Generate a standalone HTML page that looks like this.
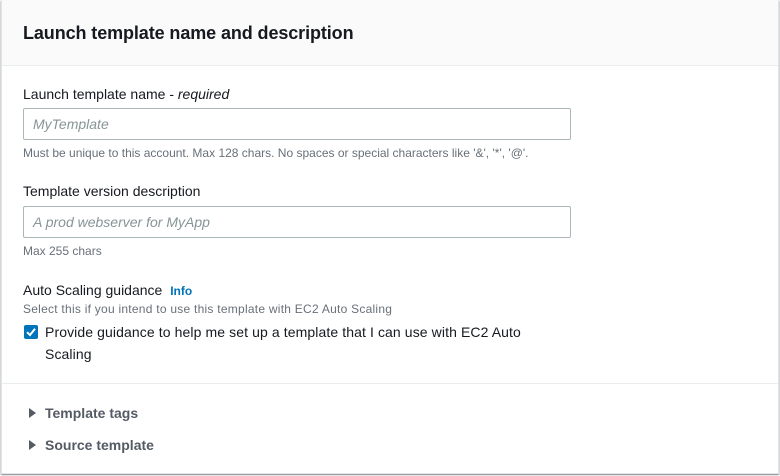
<!DOCTYPE html>
<html><head><style>
*{box-sizing:border-box;margin:0;padding:0}
body{width:780px;height:476px;background:#fff;font-family:"Liberation Sans",sans-serif;color:#16191f;position:relative;overflow:hidden}
.card{position:absolute;left:1px;top:0;width:778px;height:474px;border:1px solid #e1e4e8;border-top:none;box-shadow:0 1px 1px 0 rgba(0,28,36,.3),1px 1px 1px 0 rgba(0,28,36,.15),-1px 1px 1px 0 rgba(0,28,36,.15);background:#fff}
.hdr{position:absolute;left:0;top:0;width:100%;height:66px;background:#fafafa;border-bottom:1px solid #eaeded}
.abs{position:absolute;white-space:nowrap}
.lbl{font-size:14px}
.hint{font-size:12px;color:#687078}
.inp{position:absolute;left:21px;width:548px;height:32px;border:1px solid #aab7b8;border-radius:2px;font-size:14px;font-style:italic;color:#879596;padding:7px 9px}
.tri{position:absolute;width:0;height:0;border-top:5px solid transparent;border-bottom:5px solid transparent;border-left:7px solid #545b64}
.exp{font-size:14px;font-weight:bold;color:#545b64}
</style></head><body>
<div class="card">
<div class="hdr"></div>
<div class="abs" style="left:21px;top:23px;font-size:18px;font-weight:bold;letter-spacing:-0.1px">Launch template name and description</div>
<div class="abs lbl" style="left:21px;top:86px">Launch template name - <i>required</i></div>
<div class="inp" style="top:108px">MyTemplate</div>
<div class="abs hint" style="left:21px;top:146px">Must be unique to this account. Max 128 chars. No spaces or special characters like '&amp;', '*', '@'.</div>
<div class="abs lbl" style="left:21px;top:183px">Template version description</div>
<div class="inp" style="top:206px">A prod webserver for MyApp</div>
<div class="abs hint" style="left:21px;top:244px">Max 255 chars</div>
<div class="abs lbl" style="left:21px;top:282px">Auto Scaling guidance <b style="color:#0073bb;font-size:12px;margin-left:4px">Info</b></div>
<div class="abs hint" style="left:21px;top:302px;letter-spacing:0.25px">Select this if you intend to use this template with EC2 Auto Scaling</div>
<div class="abs" style="left:22px;top:325px;width:14px;height:14px;background:#0073bb;border-radius:2px">
<svg width="14" height="14" viewBox="0 0 14 14"><path d="M3 7.2 L6 10 L11 3.8" stroke="#fff" stroke-width="2" fill="none"/></svg></div>
<div class="abs lbl" style="left:43px;top:321px;line-height:22px;letter-spacing:0.1px">Provide guidance to help me set up a template that I can use with EC2 Auto<br>Scaling</div>
<div class="abs" style="left:0;top:383px;width:100%;height:1px;background:#eaeded"></div>
<div class="tri" style="left:27px;top:408px"></div>
<div class="abs exp" style="left:43px;top:405px">Template tags</div>
<div class="tri" style="left:27px;top:440px"></div>
<div class="abs exp" style="left:43px;top:437px">Source template</div>
</div>
</body></html>
